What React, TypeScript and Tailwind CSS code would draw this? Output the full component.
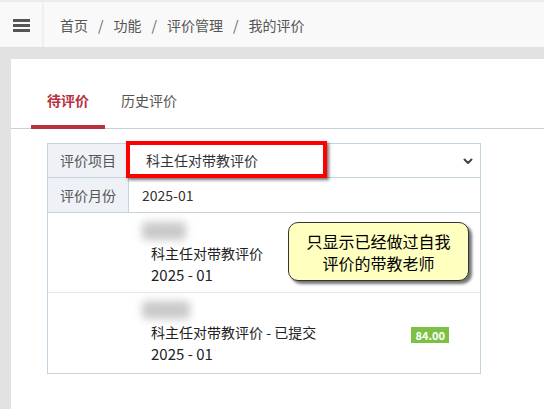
import React from "react";

const font = {
  fontFamily: '"Noto Sans CJK SC", "Noto Sans", "Liberation Sans", sans-serif',
};

function Header() {
  const crumbs = ["首页", "功能", "评价管理", "我的评价"];
  return (
    <header className="flex h-[47px] border-t-2 border-[#ececec] bg-[#f9f9f9]">
      {/* menu toggle */}
      <div className="flex w-[43px] items-center justify-center border-r border-[#ececec] shadow-[1px_0_2px_rgba(0,0,0,0.04)]">
        <div className="flex w-[17px] flex-col gap-[2px] pt-[2px]">
          <span className="h-[3px] bg-[#555]" />
          <span className="h-[3px] bg-[#555]" />
          <span className="h-[3px] bg-[#555]" />
        </div>
      </div>
      <nav className="flex items-center pl-[17px] text-[14px] leading-5 text-[#555]">
        {crumbs.map((c, i) => (
          <React.Fragment key={c}>
            {i > 0 && <span className="px-[10px] text-[#666]">/</span>}
            <span>{c}</span>
          </React.Fragment>
        ))}
      </nav>
    </header>
  );
}

function Tabs() {
  return (
    <div className="flex border-b border-[#c8d0d8] pl-5 pt-[31px]">
      <div className="-mb-px border-b-[4px] border-[#b93140] px-4 pb-[15px] text-[14px] font-bold leading-5 text-[#b93140]">
        待评价
      </div>
      <div className="px-4 pb-[15px] text-[14px] leading-5 text-[#555]">历史评价</div>
    </div>
  );
}

function Item({
  title,
  name,
  badge,
  top,
}: {
  title: string;
  name: number;
  badge?: string;
  top: string;
}) {
  return (
    <div className={`flex items-center pl-[94px] pr-[31px] ${top}`}>
      <div className="flex-1">
        {/* name is masked */}
        <div
          className="mb-[3px] h-[18px] rounded-sm bg-[#c9c9c9] blur-[4px]"
          style={{ width: name }}
        />
        <div className="w-fit pl-[9px] text-[14px] leading-[21px] text-[#222]">{title}</div>
        <div className="w-fit pl-[9px] text-[15px] leading-[21px] text-[#222]">2025 - 01</div>
      </div>
      {badge && (
        <span className="mt-[4px] bg-[#7cc143] px-[4px] text-[11px] font-bold leading-[16px] text-white">
          {badge}
        </span>
      )}
    </div>
  );
}

export default function App() {
  return (
    <div className="h-[409px] w-[544px] overflow-hidden bg-[#e2e2e3]" style={font}>
      <Header />
      <div className="ml-[11px] mt-[12px] h-[350px] bg-white">
        <Tabs />
        <div className="ml-[36px] mt-[14px] w-[434px]">
          <div className="relative border border-[#c5d3dc]">
            <div className="flex h-[34px] border-b border-[#c5d3dc]">
              <div className="flex w-[81px] items-center border-r border-[#c5d3dc] bg-[#eef1f5] pl-[12px] text-[14px] text-[#555]">
                评价项目
              </div>
              <div className="flex flex-1 items-center justify-between pl-[17px] pr-[6px] text-[14px] text-[#333]">
                <span>科主任对带教评价</span>
                <svg width="12" height="12" viewBox="0 0 24 24" fill="none" stroke="#444" strokeWidth="4" strokeLinecap="round" strokeLinejoin="round">
                  <path d="M5 9l7 7 7-7" />
                </svg>
              </div>
            </div>
            <div className="flex h-[34px]">
              <div className="flex w-[81px] items-center border-r border-[#c5d3dc] bg-[#eef1f5] pl-[12px] text-[14px] text-[#555]">
                评价月份
              </div>
              <div className="flex flex-1 items-center pl-[13px] text-[14px] text-[#333]">2025-01</div>
            </div>
            {/* highlight around the selector */}
            <div className="absolute left-[78px] top-[-3px] h-[37px] w-[201px] border-[4px] border-[#ff0000] shadow-[2px_2px_3px_rgba(0,0,0,0.55)]" />
          </div>

          <div className="relative border-x border-b border-[#c5d3dc]">
            <div className="h-[80px] border-b border-[#e4e7ea]">
              <Item title="科主任对带教评价" name={44} top="pt-[9px]" />
            </div>
            <div className="h-[80px]">
              <Item title="科主任对带教评价 - 已提交" name={48} badge="84.00" top="pt-[8px]" />
            </div>
            {/* note bubble */}
            <div className="absolute left-[240px] top-[9px] flex h-[59px] w-[181px] flex-col items-center justify-center rounded-[10px] border border-[#333] bg-[#ffffc0] text-[16px] leading-[22px] text-black shadow-[3px_3px_3px_rgba(0,0,0,0.55)]">
              <div>只显示已经做过自我</div>
              <div>评价的带教老师</div>
            </div>
          </div>
        </div>
      </div>
    </div>
  );
}
